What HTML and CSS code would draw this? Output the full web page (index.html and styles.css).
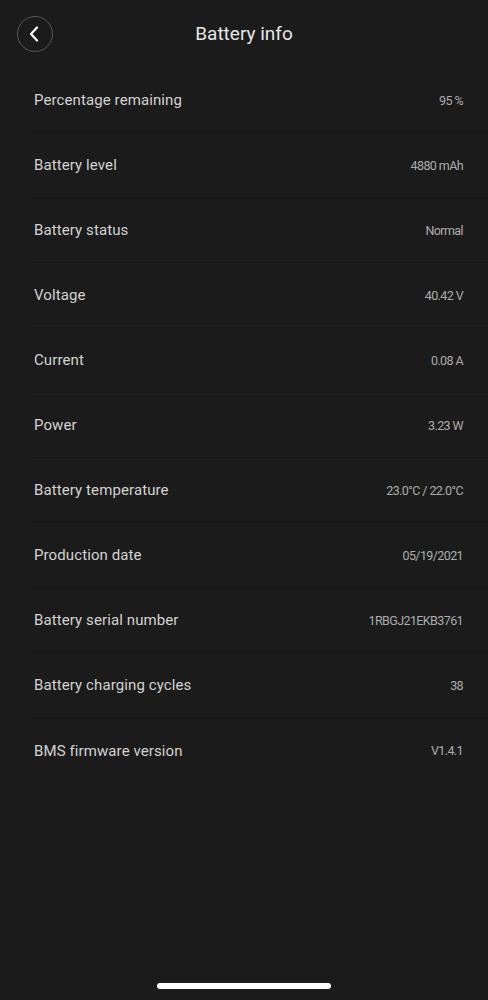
FILE: index.html
```html
<!DOCTYPE html>
<html>
<head>
<meta charset="utf-8">
<link rel="stylesheet" href="styles.css">
</head>
<body>
<div class="screen">
  <header class="header">
    <button class="back" aria-label="Back">
      <svg width="12" height="16" viewBox="0 0 12 16"><path d="M9 1.5 L3 8 L9 14.5" fill="none" stroke="#fff" stroke-width="2.2" stroke-linecap="round" stroke-linejoin="round"/></svg>
    </button>
    <h1 class="title">Battery info</h1>
  </header>
  <ul class="list">
    <li class="row"><span class="label">Percentage remaining</span><span class="value">95 %</span></li>
    <li class="row"><span class="label">Battery level</span><span class="value">4880 mAh</span></li>
    <li class="row"><span class="label">Battery status</span><span class="value">Normal</span></li>
    <li class="row"><span class="label">Voltage</span><span class="value">40.42 V</span></li>
    <li class="row"><span class="label">Current</span><span class="value">0.08 A</span></li>
    <li class="row"><span class="label">Power</span><span class="value">3.23 W</span></li>
    <li class="row"><span class="label">Battery temperature</span><span class="value">23.0°C / 22.0°C</span></li>
    <li class="row"><span class="label">Production date</span><span class="value">05/19/2021</span></li>
    <li class="row"><span class="label">Battery serial number</span><span class="value">1RBGJ21EKB3761</span></li>
    <li class="row"><span class="label">Battery charging cycles</span><span class="value">38</span></li>
    <li class="row last"><span class="label">BMS firmware version</span><span class="value">V1.4.1</span></li>
  </ul>
  <div class="home-bar"></div>
</div>
</body>
</html>
```

FILE: styles.css
```css
html, body {
  margin: 0;
  padding: 0;
  background: #1b1b1b;
}
body {
  font-family: Roboto, "Liberation Sans", sans-serif;
  color: #d6d6d6;
}
.screen {
  width: 488px;
  height: 1000px;
  position: relative;
  display: flex;
  flex-direction: column;
  background: #1b1b1b;
}
.header {
  height: 68px;
  position: relative;
  display: flex;
  align-items: center;
  justify-content: center;
}
.back {
  position: absolute;
  left: 17px;
  top: 16px;
  width: 36px;
  height: 36px;
  border-radius: 50%;
  border: 1px solid #585858;
  background: transparent;
  display: flex;
  align-items: center;
  justify-content: center;
  padding: 0 2px 0 0;
  box-sizing: border-box;
}
.title {
  margin: -1px 0 0 0;
  font-size: 19px;
  font-weight: 400;
  color: #e6e6e6;
}
.list {
  list-style: none;
  margin: 0;
  padding: 0 0 0 32px;
}
.row {
  height: 65px;
  box-sizing: border-box;
  border-bottom: 1px solid #161616;
  display: flex;
  align-items: center;
  justify-content: space-between;
  padding: 0 25px 0 2px;
}
.row.last {
  border-bottom: none;
}
.label {
  font-size: 15px;
  letter-spacing: 0.1px;
  color: #d2d2d2;
}
.value {
  font-size: 12.5px;
  letter-spacing: -0.6px;
  color: #acacac;
}
.home-bar {
  position: absolute;
  left: 157px;
  top: 983px;
  width: 174px;
  height: 6px;
  border-radius: 3px;
  background: #ffffff;
}
```
